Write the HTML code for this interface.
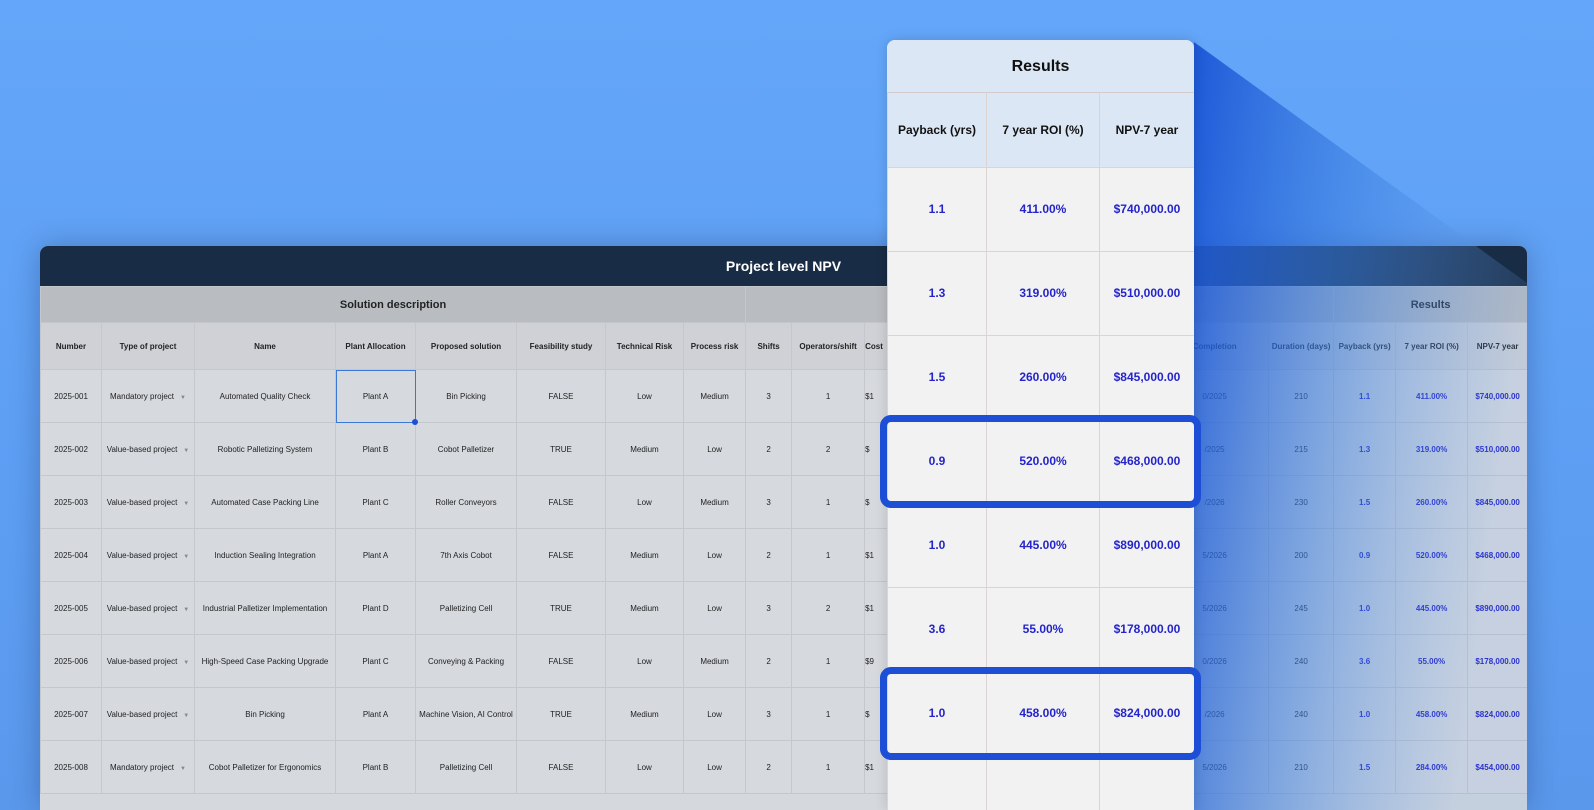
<!DOCTYPE html>
<html style="width:1594px;height:810px;overflow:hidden"><head><meta charset="utf-8"><style>
*{margin:0;padding:0;box-sizing:border-box}
body{width:1594px;height:810px;overflow:hidden;background:linear-gradient(180deg,#64a6f9 0%,#5d9ef3 60%,#5a98ec 100%);font-family:"Liberation Sans",sans-serif;position:relative}
.card{position:absolute;left:40px;top:246px;width:1487px;height:564px;border-radius:8px 8px 0 0;overflow:hidden;background:#d5d8dd;box-shadow:0 0 30px rgba(0,0,40,.25)}
.top{height:40px;background:#182c45;color:#fff;font-weight:bold;font-size:14px;text-align:center;line-height:40px}
table{border-collapse:collapse;table-layout:fixed;font-size:8px;color:#222}
td{border:1px solid #c4c7cc;text-align:center;overflow:hidden;white-space:nowrap}
tr.sec td{height:36px;background:#b9bcc1;font-weight:bold;font-size:11px}
tr.hd td{height:47px;background:#cfd1d6;font-weight:bold}
tr.r td{height:53px;background:#d6d9de}
.b{color:#2020c8;font-weight:bold}
.dd{color:#888;font-size:6px;margin-left:6px}
.panel{position:absolute;left:887px;top:40px;width:307px;height:770px;border-radius:8px 8px 0 0;overflow:hidden;background:#f2f2f2;box-shadow:0 0 12px rgba(0,0,0,.15)}
.panel .t{height:53px;background:#dbe7f4;text-align:center;font-weight:bold;font-size:16px;line-height:53px;color:#111;border-bottom:1px solid #d4cccc}
.panel table{font-size:12px;width:307px}
.panel td{border:1px solid #dcd3d3;border-top:none}
.panel tr.h td{height:74px;background:#dbe7f4;font-weight:bold;color:#111}
.panel tr.v td{height:84px;color:#2424cc;font-weight:bold}
.hl{position:absolute;left:880px;width:321px;border:7px solid #1d4fd6;border-radius:11px}
</style></head><body>
<div class="card">
<div class="top">Project level NPV</div>
<table style="width:1487px">
<colgroup><col style="width:61px"><col style="width:93px"><col style="width:141px"><col style="width:80px"><col style="width:101px"><col style="width:89px"><col style="width:78px"><col style="width:62px"><col style="width:46px"><col style="width:73px"><col style="width:70px"><col style="width:113px"><col style="width:113px"><col style="width:108px"><col style="width:65px"><col style="width:62px"><col style="width:72px"><col style="width:60px"></colgroup>
<tr class="sec"><td colspan="8">Solution description</td><td colspan="7"></td><td colspan="3">Results</td></tr>
<tr class="hd"><td>Number</td><td>Type of project</td><td>Name</td><td>Plant Allocation</td><td>Proposed solution</td><td>Feasibility study</td><td>Technical Risk</td><td>Process risk</td><td>Shifts</td><td>Operators/shift</td><td style="text-align:left">Cost</td><td></td><td></td><td>Completion</td><td>Duration (days)</td><td>Payback (yrs)</td><td>7 year ROI (%)</td><td>NPV-7 year</td></tr>
<tr class="r"><td>2025-001</td><td>Mandatory project<span class="dd">▼</span></td><td>Automated Quality Check</td><td style="outline:1px solid #3a78d8;outline-offset:-1px">Plant A</td><td>Bin Picking</td><td>FALSE</td><td>Low</td><td>Medium</td><td>3</td><td>1</td><td style="text-align:left">$1</td><td></td><td></td><td>0/2025</td><td>210</td><td class="b">1.1</td><td class="b">411.00%</td><td class="b">$740,000.00</td></tr>
<tr class="r"><td>2025-002</td><td>Value-based project<span class="dd">▼</span></td><td>Robotic Palletizing System</td><td>Plant B</td><td>Cobot Palletizer</td><td>TRUE</td><td>Medium</td><td>Low</td><td>2</td><td>2</td><td style="text-align:left">$</td><td></td><td></td><td>/2025</td><td>215</td><td class="b">1.3</td><td class="b">319.00%</td><td class="b">$510,000.00</td></tr>
<tr class="r"><td>2025-003</td><td>Value-based project<span class="dd">▼</span></td><td>Automated Case Packing Line</td><td>Plant C</td><td>Roller Conveyors</td><td>FALSE</td><td>Low</td><td>Medium</td><td>3</td><td>1</td><td style="text-align:left">$</td><td></td><td></td><td>/2026</td><td>230</td><td class="b">1.5</td><td class="b">260.00%</td><td class="b">$845,000.00</td></tr>
<tr class="r"><td>2025-004</td><td>Value-based project<span class="dd">▼</span></td><td>Induction Sealing Integration</td><td>Plant A</td><td>7th Axis Cobot</td><td>FALSE</td><td>Medium</td><td>Low</td><td>2</td><td>1</td><td style="text-align:left">$1</td><td></td><td></td><td>5/2026</td><td>200</td><td class="b">0.9</td><td class="b">520.00%</td><td class="b">$468,000.00</td></tr>
<tr class="r"><td>2025-005</td><td>Value-based project<span class="dd">▼</span></td><td>Industrial Palletizer Implementation</td><td>Plant D</td><td>Palletizing Cell</td><td>TRUE</td><td>Medium</td><td>Low</td><td>3</td><td>2</td><td style="text-align:left">$1</td><td></td><td></td><td>5/2026</td><td>245</td><td class="b">1.0</td><td class="b">445.00%</td><td class="b">$890,000.00</td></tr>
<tr class="r"><td>2025-006</td><td>Value-based project<span class="dd">▼</span></td><td>High-Speed Case Packing Upgrade</td><td>Plant C</td><td>Conveying &amp; Packing</td><td>FALSE</td><td>Low</td><td>Medium</td><td>2</td><td>1</td><td style="text-align:left">$9</td><td></td><td></td><td>0/2026</td><td>240</td><td class="b">3.6</td><td class="b">55.00%</td><td class="b">$178,000.00</td></tr>
<tr class="r"><td>2025-007</td><td>Value-based project<span class="dd">▼</span></td><td>Bin Picking</td><td>Plant A</td><td>Machine Vision, AI Control</td><td>TRUE</td><td>Medium</td><td>Low</td><td>3</td><td>1</td><td style="text-align:left">$</td><td></td><td></td><td>/2026</td><td>240</td><td class="b">1.0</td><td class="b">458.00%</td><td class="b">$824,000.00</td></tr>
<tr class="r"><td>2025-008</td><td>Mandatory project<span class="dd">▼</span></td><td>Cobot Palletizer for Ergonomics</td><td>Plant B</td><td>Palletizing Cell</td><td>FALSE</td><td>Low</td><td>Low</td><td>2</td><td>1</td><td style="text-align:left">$1</td><td></td><td></td><td>5/2026</td><td>210</td><td class="b">1.5</td><td class="b">284.00%</td><td class="b">$454,000.00</td></tr>
</table>
</div>
<div style="position:absolute;left:412px;top:419px;width:6px;height:6px;border-radius:50%;background:#1d4fd6"></div>
<svg style="position:absolute;left:0;top:0" width="1594" height="810">
<defs><linearGradient id="g" x1="0" y1="0" x2="1" y2="0.3">
<stop offset="0" stop-color="#1a55d6" stop-opacity=".95"/><stop offset=".5" stop-color="#3a7ee0" stop-opacity=".55"/><stop offset="1" stop-color="#6aa0e8" stop-opacity=".15"/></linearGradient></defs>
<polygon points="1194,42 1527,283 1527,810 1194,810" fill="url(#g)"/>
</svg>
<div class="panel">
<div class="t">Results</div>
<table><colgroup><col style="width:99px"><col style="width:113px"><col style="width:95px"></colgroup>
<tr class="h"><td>Payback (yrs)</td><td>7 year ROI (%)</td><td>NPV-7 year</td></tr>
<tr class="v"><td>1.1</td><td>411.00%</td><td>$740,000.00</td></tr>
<tr class="v"><td>1.3</td><td>319.00%</td><td>$510,000.00</td></tr>
<tr class="v"><td>1.5</td><td>260.00%</td><td>$845,000.00</td></tr>
<tr class="v"><td>0.9</td><td>520.00%</td><td>$468,000.00</td></tr>
<tr class="v"><td>1.0</td><td>445.00%</td><td>$890,000.00</td></tr>
<tr class="v"><td>3.6</td><td>55.00%</td><td>$178,000.00</td></tr>
<tr class="v"><td>1.0</td><td>458.00%</td><td>$824,000.00</td></tr>
<tr class="v"><td></td><td></td><td></td></tr>
</table></div>
<div class="hl" style="top:415px;height:93px"></div>
<div class="hl" style="top:667px;height:93px"></div>
</body></html>
